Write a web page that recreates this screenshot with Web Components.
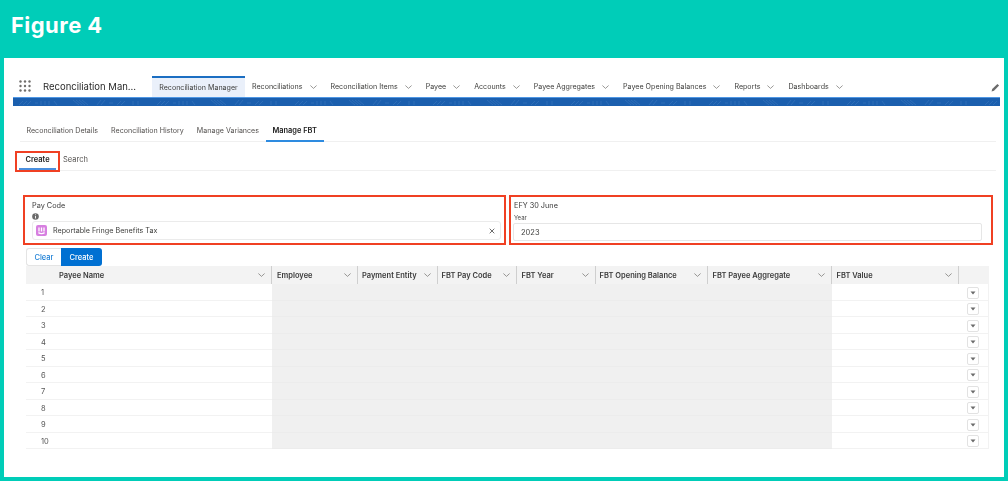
<!DOCTYPE html>
<html lang="en"><head><meta charset="utf-8"><title>Figure 4</title>
<style>
html,body{margin:0;padding:0}
body{width:1008px;height:481px;overflow:hidden;background:#00cdb8;font-family:Inter,"Liberation Sans",sans-serif;font-size:7.5px;color:#3e3e3c;display:flex;flex-direction:column}
</style></head><body>
<figure-title>Figure 4</figure-title>
<app-panel>
  <app-nav name="Reconciliation Man...">
    <nav-item active>Reconciliation Manager</nav-item>
    <nav-item menu>Reconciliations</nav-item>
    <nav-item menu>Reconciliation Items</nav-item>
    <nav-item menu>Payee</nav-item>
    <nav-item menu>Accounts</nav-item>
    <nav-item menu>Payee Aggregates</nav-item>
    <nav-item menu>Payee Opening Balances</nav-item>
    <nav-item menu>Reports</nav-item>
    <nav-item menu>Dashboards</nav-item>
  </app-nav>
  <brand-stripe></brand-stripe>
  <tab-bar>
    <tab-item>Reconciliation Details</tab-item>
    <tab-item>Reconciliation History</tab-item>
    <tab-item>Manage Variances</tab-item>
    <tab-item active>Manage FBT</tab-item>
  </tab-bar>
  <sub-tabs></sub-tabs>
  <field-row>
    <pay-code-field></pay-code-field>
    <year-field></year-field>
  </field-row>
  <action-bar></action-bar>
  <fbt-grid></fbt-grid>
</app-panel>
<script>
function el(name, css, html){
  customElements.define(name, class extends HTMLElement{
    connectedCallback(){
      if(this.shadowRoot) return;
      const r=this.attachShadow({mode:'open'});
      r.innerHTML='<style>'+css+'</style>'+(typeof html==='function'?html(this):html);
    }
  });
}
const chev=(w=7,c='#706e6b')=>`<svg width="${w}" height="4" viewBox="0 0 7 4" style="flex:none;display:block"><path d="M.4.5 3.5 3.4 6.6.5" fill="none" stroke="${c}" stroke-width=".7"/></svg>`;

el('figure-title',`:host{display:block;height:58px;box-sizing:border-box;padding:11px 0 0 11px;color:#fff;font:700 22px/28px Inter,"Liberation Sans",sans-serif;letter-spacing:.45px}`,`<slot></slot>`);
el('app-panel',`:host{display:flex;flex-direction:column;height:419px;margin:0 4px;background:#fff;filter:blur(.3px)}`,`<slot></slot>`);

el('app-nav',`:host{display:flex;align-items:stretch;height:21px;margin-top:18px;padding-left:15px}
.grid{flex:none;width:12px;height:12px;align-self:center;margin-right:12px;margin-top:-1px}
.name{flex:none;width:97px;font-size:9.5px;line-height:21px;color:#2b2b2b;white-space:nowrap;margin-right:12px}
.items{display:flex;flex:1}
.pencil{flex:none;width:9px;height:9px;align-self:center;margin:2px 4px 0 0}`,
h=>`<svg class="grid" viewBox="0 0 12 12" fill="#706e6b">${[1.5,6,10.5].flatMap(y=>[1.5,6,10.5].map(x=>`<circle cx="${x}" cy="${y}" r="1.2"/>`)).join('')}</svg>
<div class="name">${h.getAttribute('name')}</div><div class="items"><slot></slot></div>
<svg class="pencil" viewBox="0 0 9 9"><path d="M.6 8.4 1.2 6 6.4.9 8.1 2.6 3 7.8Z" fill="#6b6b6b"/></svg>`);

el('nav-item',`:host{display:flex;align-items:center;gap:7px;box-sizing:border-box;padding:1px 7px 0;color:#3e3e3c;white-space:nowrap;line-height:1;font-size:7.1px}
:host([active]){background:#eaf0fa;border-top:2px solid #1b6ec2;padding:0;width:93px;justify-content:center;flex:none}`,
h=>`<slot></slot>${h.hasAttribute('menu')?chev():''}`);

el('brand-stripe',`:host{display:block;height:9px;margin:0 4px 0 9px;background:#1b5fae;border-top:1px solid #4f97e4;box-sizing:border-box;overflow:hidden}
svg{display:block;width:100%;height:8px}`,
`<svg><defs><pattern id="p" width="138" height="8" patternUnits="userSpaceOnUse"><g fill="none" stroke="#6f9fd3" stroke-width=".4" opacity=".55"><path d="M6 7 10 3M10 7 14 3M14 7 18 3M22 5h3M28 3v4M32 3v4M36 3v4M41 3 44 7M60 2 66 7M63 2 69 7M66 2 72 7M69 2 75 7M84 7 88 2M88 7 92 2M96 5h4M104 7 108 3M108 7 112 3M120 3v4M125 3v4"/></g></pattern></defs><rect width="100%" height="8" fill="url(#p)"/></svg>`);

el('tab-bar',`:host{display:flex;height:36px;box-sizing:border-box;margin:0 8px 0 16px;padding:14px 0 0 0;border-bottom:1px solid #f0f0f0}`,`<slot></slot>`);
el('tab-item',`:host{display:flex;align-items:flex-start;box-sizing:border-box;height:22px;padding:6px 6.5px 0;color:#54514f;white-space:nowrap;line-height:9px;font-size:7.1px}
:host([active]){font-weight:600;color:#222;border-bottom:2px solid #2e8be0;margin-bottom:-1px;padding:6px 7px 0;font-size:7.4px}`,`<slot></slot>`);

el('sub-tabs',`:host{display:flex;height:29px;box-sizing:border-box;margin:0 8px 0 16px;padding-top:9px;border-bottom:1px solid #f0f0f0}
.box{box-sizing:border-box;width:45px;height:21px;margin-left:-5px;border:2px solid #f04023;padding:0 2px;display:flex;flex:none}
.c{box-sizing:border-box;flex:1;height:17px;border-bottom:2px solid #4a8fde;font-weight:600;color:#222;line-height:9px;padding:2px 0 0;text-align:center}
.s{margin-left:3px;padding-top:4px;line-height:9px;color:#54514f}`,
`<div class="box"><div class="c">Create</div></div><div class="s">Search</div>`);

el('field-row',`:host{display:flex;gap:3px;margin:24px 0 0 19px;width:970px}`,`<slot></slot>`);
const box=`:host{display:block;box-sizing:border-box;height:50px;border:2px solid #f04023}`;
el('pay-code-field',box+`:host{width:483px}
.l{padding:4px 0 0 7px;font-size:7.3px;line-height:10px;color:#3a3a3a}
.i{display:block;margin:2px 0 0 7px}
.in{box-sizing:border-box;display:flex;align-items:center;height:19px;margin:1px 3px 0 7px;border:1px solid #ebebeb;border-radius:3px;padding:0 5px 0 3px;color:#3e3e3c;font-size:7.2px}
.t{flex:1;margin-left:6px}`,
`<div class="l">Pay Code</div>
<svg class="i" width="7" height="7" viewBox="0 0 7 7"><circle cx="3.5" cy="3.5" r="3.3" fill="#6b6b6b"/><path d="M3.5 1.4v.8M3.5 3v2.5" stroke="#fff" stroke-width=".9"/></svg>
<div class="in"><svg width="11" height="11" viewBox="0 0 11 11"><rect width="11" height="11" rx="2" fill="#d77fe0"/><path d="M3 2.6v4M5.5 2.6v4M8 2.6v4M2.4 7.6c1.8 1.2 4.4 1.2 6.2 0" fill="none" stroke="#fff" stroke-width="1.3"/></svg><span class="t">Reportable Fringe Benefits Tax</span>
<svg width="6" height="6" viewBox="0 0 6 6"><path d="M.7.7 5.3 5.3M5.3.7.7 5.3" stroke="#5c5c5c" stroke-width=".9"/></svg></div>`);
el('year-field',box+`:host{width:484px}
.l{padding:4px 0 0 3px;font-size:7.3px;line-height:10px;color:#3a3a3a}
.y{padding:3px 0 0 3px;font-size:6px;line-height:8px;color:#4a4a4a}
.in{box-sizing:border-box;height:18px;margin:1px 9px 0 2px;border:1px solid #e6e6e6;border-radius:2px;padding-left:7px;line-height:17px;font-size:7.5px;color:#3e3e3c}`,
`<div class="l">EFY 30 June</div><div class="y">Year</div><div class="in">2023</div>`);

el('action-bar',`:host{display:flex;height:18px;margin:3px 0 0 22px}
div{box-sizing:border-box;display:flex;align-items:center;justify-content:center;font-weight:500;height:18px}
.a{width:35px;color:#1b7fd6;border:1px solid #e4e4e4;border-right:0;border-radius:3px 0 0 3px}
.b{width:41px;color:#fff;background:#0070d2;border-radius:0 3px 3px 0}`,
`<div class="a">Clear</div><div class="b">Create</div>`);

const cols=[['Payee Name',246,33],['Employee',85.5,5],['Payment Entity',80,4.5],['FBT Pay Code',79,4],['FBT Year',79,5],['FBT Opening Balance',112,4],['FBT Payee Aggregate',124,5],['FBT Value',127,5],['',30,0]];
el('fbt-grid',`:host{display:grid;grid-template-columns:${cols.map(c=>c[1]+'px').join(' ')};grid-template-rows:18px;grid-auto-rows:16.5px;width:962.5px;margin-left:22px;color:#444}
.h{display:flex;align-items:center;justify-content:space-between;box-sizing:border-box;height:18px;background:#f3f3f3;border-right:1.5px solid #cfcfcf;padding-right:6px;font-weight:600;color:#3a3a3a;white-space:nowrap}
.h.last{border-right:0;padding:0}
.c{box-sizing:border-box;border-bottom:1px solid #f2f2f2;display:flex;align-items:center;padding-top:2px}
.n{padding-left:15px;color:#555}
.g{background:#f0f0f0;border-bottom-color:#ececec}
.a{justify-content:flex-end;padding-right:9px;border-right:1px solid #f2f2f2}
.b{width:12px;height:12px;box-sizing:border-box;border:1px solid #e2e2e2;border-radius:2px;display:flex;align-items:center;justify-content:center}`,
()=>{
  let s=cols.map((c,i)=>`<div class="h${i==8?' last':''}" style="padding-left:${c[2]}px">${c[0]?`<span>${c[0]}</span>`+chev():''}</div>`).join('');
  for(let r=1;r<=10;r++){
    s+=`<div class="c n">${r}</div>`;
    for(let i=1;i<7;i++) s+=`<div class="c g"></div>`;
    s+=`<div class="c"></div><div class="c a"><div class="b"><svg width="6" height="4" viewBox="0 0 6 4"><path d="M.5.5h5L3 3.6Z" fill="#6b6b6b"/></svg></div></div>`;
  }
  return s;
});
</script>
</body></html>
